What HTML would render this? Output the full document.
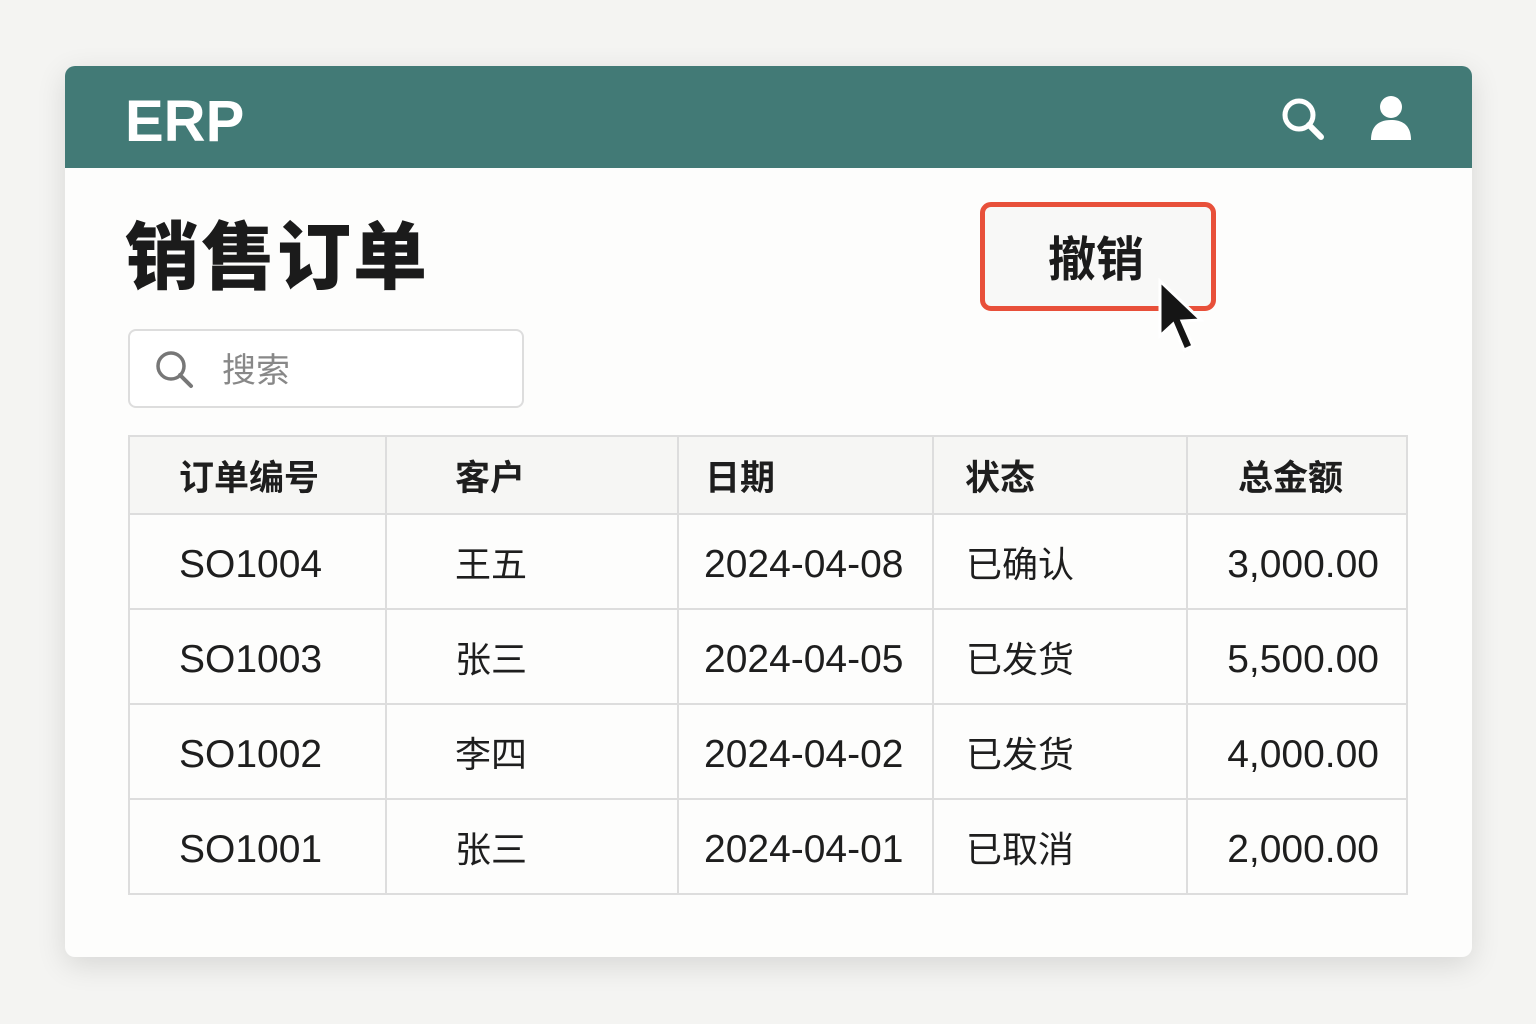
<!DOCTYPE html>
<html><head><meta charset="utf-8"><style>
body{margin:0;width:1536px;height:1024px;background:#f4f4f2;font-family:"Liberation Sans","Noto Sans CJK SC",sans-serif;position:relative;overflow:hidden}
.card{position:absolute;left:65px;top:66px;width:1407px;height:891px;background:#fdfdfc;border-radius:10px;box-shadow:0 8px 30px rgba(0,0,0,.12);overflow:hidden}
.hdr{position:absolute;left:0;top:0;width:100%;height:102px;background:#427a76}
.logo{position:absolute;left:60px;top:20px;color:#fff;font-size:58px;font-weight:bold;line-height:72px}
.t{position:absolute;font-family:"Noto Sans CJK SC",sans-serif}
.title{left:60px;top:136px;font-size:74px;font-weight:900;color:#1b1b1b;line-height:100px;letter-spacing:2px}
.search{position:absolute;left:63px;top:263px;width:392px;height:75px;border:2px solid #ddd;border-radius:8px;background:#fff}
.btn{position:absolute;left:915px;top:136px;width:226px;height:99px;border:5px solid #e8503a;border-radius:11px;background:#f8f8f7}
table{position:absolute;left:63px;top:369px;border-collapse:collapse;border:2px solid #ddd;font-family:"Noto Sans CJK SC",sans-serif;color:#1e1e1e}
td,th{border:2px solid #ddd;padding:0;height:93px;font-size:36px;font-weight:normal;text-align:left}
th{height:78px;background:#f6f6f4;font-size:35px;font-weight:bold}
td.n{font-family:"Liberation Sans",sans-serif;font-size:39px}
td.n span{position:relative;top:3px}
</style></head><body>
<div class="card">
<div class="hdr"><div class="logo">ERP</div>
<svg style="position:absolute;left:1215px;top:30px" width="46" height="46" viewBox="0 0 46 46"><circle cx="19" cy="19" r="14" fill="none" stroke="#fff" stroke-width="5"/><line x1="29" y1="29" x2="41" y2="41" stroke="#fff" stroke-width="6" stroke-linecap="round"/></svg>
<svg style="position:absolute;left:1304px;top:28px" width="44" height="48" viewBox="0 0 44 48"><circle cx="22" cy="13" r="11" fill="#fff"/><path d="M2 46 C2 30 12 26 22 26 C32 26 42 30 42 46 Z" fill="#fff"/></svg>
</div>
<div class="t title">销售订单</div>
<div class="search">
<svg style="position:absolute;left:24px;top:18px" width="42" height="42" viewBox="0 0 42 42"><circle cx="17" cy="17" r="13" fill="none" stroke="#777" stroke-width="3.5"/><line x1="26" y1="26" x2="37" y2="37" stroke="#777" stroke-width="4" stroke-linecap="round"/></svg>
<div class="t" style="left:92px;top:14px;font-size:34px;color:#888;line-height:46px">搜索</div>
</div>
<div class="btn"><div class="t" style="left:63px;top:18px;font-size:48px;font-weight:bold;color:#1b1b1b;line-height:60px">撤销</div></div>
<svg style="position:absolute;left:1092px;top:212px" width="50" height="76" viewBox="0 0 50 76"><path d="M3 3 L3 58 L16 46 L27 72 L36 68 L25 43 L44 42 Z" fill="#151515" stroke="#fff" stroke-width="3"/></svg>
<table>
<tr><th style="width:257px;padding-left:49px;box-sizing:border-box">订单编号</th><th style="width:292px;padding-left:68px;box-sizing:border-box">客户</th><th style="width:255px;padding-left:26px;box-sizing:border-box">日期</th><th style="width:254px;padding-left:31px;box-sizing:border-box">状态</th><th style="width:220px;padding-left:50px;box-sizing:border-box">总金额</th></tr>
<tr><td class="n" style="padding-left:49px"><span>SO1004</span></td><td style="padding-left:68px">王五</td><td class="n" style="padding-left:25px"><span>2024-04-08</span></td><td style="padding-left:32px">已确认</td><td class="n" style="text-align:right;padding-right:27px"><span>3,000.00</span></td></tr>
<tr><td class="n" style="padding-left:49px"><span>SO1003</span></td><td style="padding-left:68px">张三</td><td class="n" style="padding-left:25px"><span>2024-04-05</span></td><td style="padding-left:32px">已发货</td><td class="n" style="text-align:right;padding-right:27px"><span>5,500.00</span></td></tr>
<tr><td class="n" style="padding-left:49px"><span>SO1002</span></td><td style="padding-left:68px">李四</td><td class="n" style="padding-left:25px"><span>2024-04-02</span></td><td style="padding-left:32px">已发货</td><td class="n" style="text-align:right;padding-right:27px"><span>4,000.00</span></td></tr>
<tr><td class="n" style="padding-left:49px"><span>SO1001</span></td><td style="padding-left:68px">张三</td><td class="n" style="padding-left:25px"><span>2024-04-01</span></td><td style="padding-left:32px">已取消</td><td class="n" style="text-align:right;padding-right:27px"><span>2,000.00</span></td></tr>
</table>
</div>
</body></html>
